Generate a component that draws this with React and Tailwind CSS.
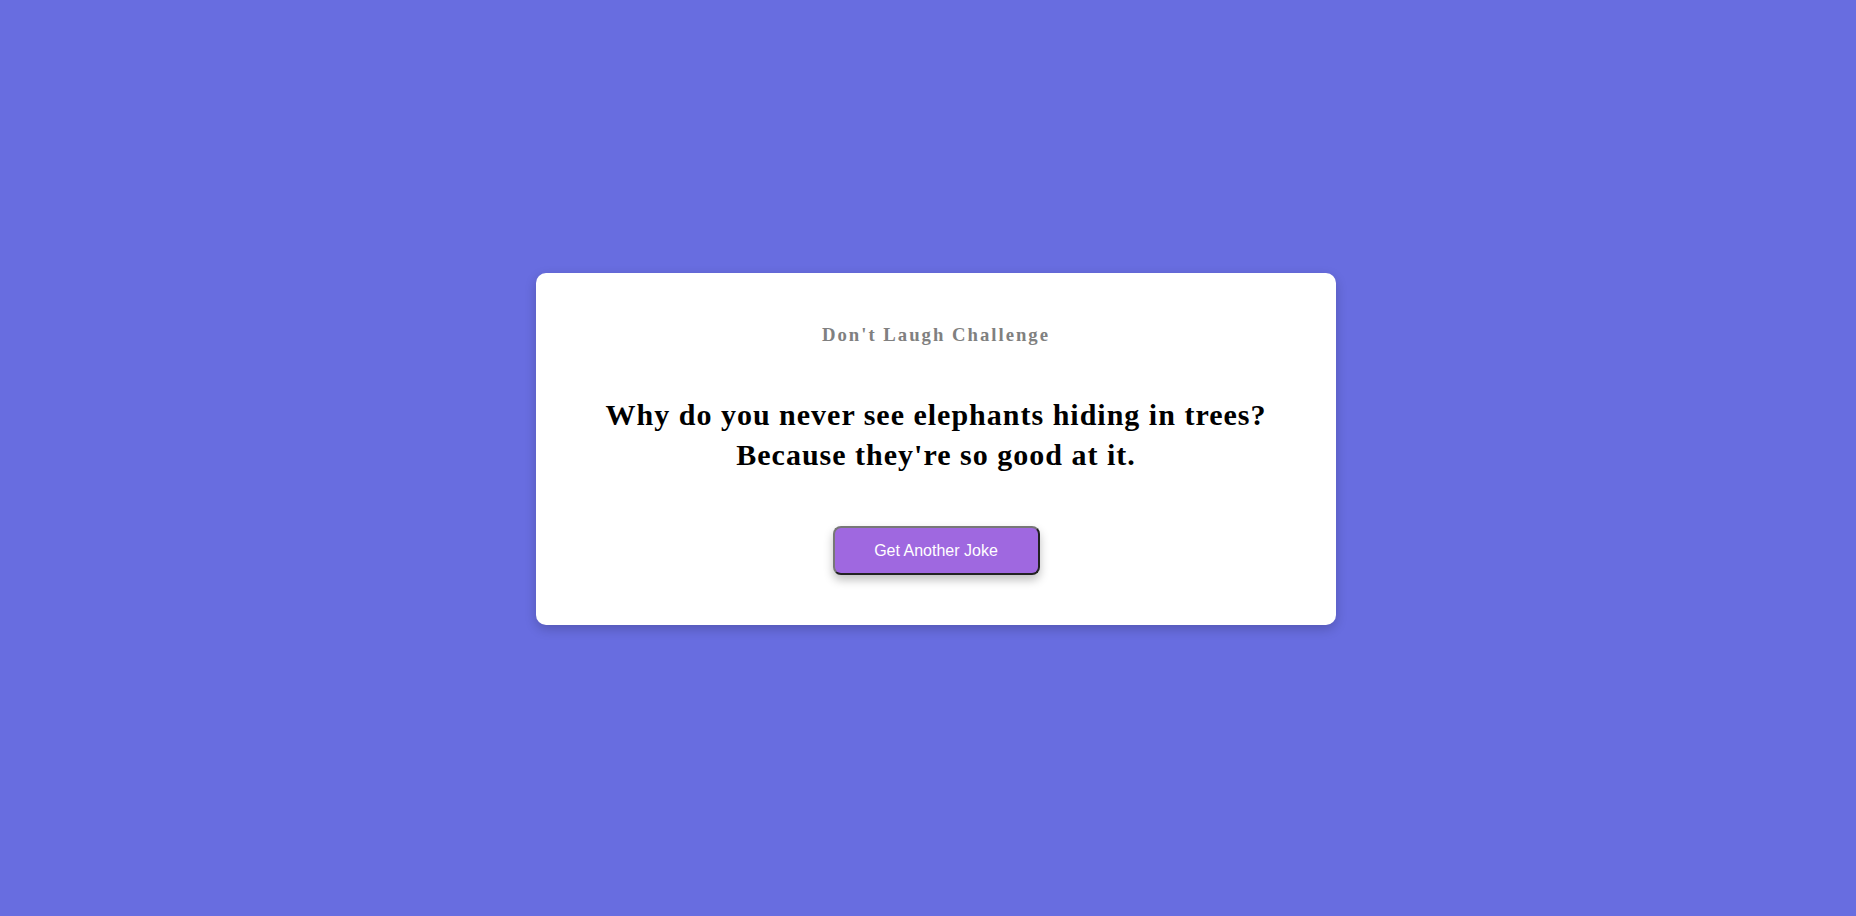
import { useState } from 'react';

const jokes = [
  "Why do you never see elephants hiding in trees? Because they're so good at it.",
  "What do you call a fake noodle? An impasta.",
  "Why don't skeletons fight each other? They don't have the guts.",
];

const App = () => {
  const [index, setIndex] = useState(0);

  return (
    <div className="min-h-screen bg-[#686de0] flex items-center justify-center pb-[18px]">
      <div className="ml-4 w-[800px] bg-white rounded-[10px] shadow-[0_4px_12px_rgba(0,0,0,0.2)] px-12 pt-[48px] pb-[50px] text-center">
        <h3 className="font-['Liberation_Serif',serif] font-bold text-[18.72px] leading-[27px] tracking-[2px] text-[#808080]">
          Don't Laugh Challenge
        </h3>
        <p className="mt-[47px] mx-auto max-w-[690px] font-['Liberation_Serif',serif] font-bold text-[30px] leading-[40px] tracking-[1px] text-black">
          {jokes[index]}
        </p>
        <button
          onClick={() => setIndex((index + 1) % jokes.length)}
          className="mt-[51px] w-[207px] h-[49px] bg-[#9f68e0] text-white text-[16px] font-['Liberation_Sans',Arial,sans-serif] rounded-[8px] border-2 shadow-[0_5px_10px_rgba(0,0,0,0.25)]"
          style={{ borderStyle: 'outset', borderColor: '#777' }}
        >
          Get Another Joke
        </button>
      </div>
    </div>
  );
};

export default App;
